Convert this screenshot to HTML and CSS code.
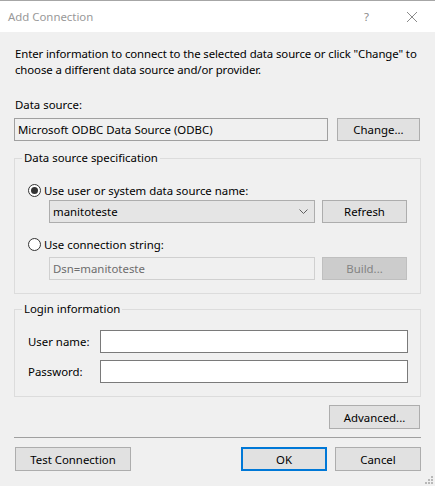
FILE: index.html
```html
<!DOCTYPE html>
<html>
<head>
<meta charset="utf-8">
<link rel="stylesheet" href="styles.css">
</head>
<body>
<div class="window">
  <div class="titlebar">
    <span class="title">Add Connection</span>
    <span class="tb-help">?</span>
    <span class="tb-close"><svg width="12" height="12" viewBox="0 0 12 12"><path d="M1 1 L11 11 M11 1 L1 11" stroke="#8a8a8a" stroke-width="1" fill="none"/></svg></span>
  </div>
  <div class="content">
    <p class="intro">Enter information to connect to the selected data source or click "Change" to choose a different data source and/or provider.</p>
    <div class="label ds-label">Data source:</div>
    <div class="row ds-row">
      <div class="textbox ds-box">Microsoft ODBC Data Source (ODBC)</div>
      <div class="btn btn-change">Change...</div>
    </div>

    <fieldset class="group spec">
      <legend>Data source specification</legend>
      <div class="group-body spec-body">
        <div class="radio-row">
          <span class="radio checked"></span><span>Use user or system data source name:</span>
        </div>
        <div class="row sub-row">
          <div class="combo"><span>manitoteste</span><svg class="chev" width="9" height="6" viewBox="0 0 9 6"><path d="M0.5 0.5 L4.5 4.5 L8.5 0.5" stroke="#606060" fill="none"/></svg></div>
          <div class="btn btn-side">Refresh</div>
        </div>
        <div class="radio-row r2">
          <span class="radio"></span><span>Use connection string:</span>
        </div>
        <div class="row sub-row">
          <div class="textbox disabled conn">Dsn=manitoteste</div>
          <div class="btn btn-side disabled-btn">Build...</div>
        </div>
      </div>
    </fieldset>

    <fieldset class="group login">
      <legend>Login information</legend>
      <div class="group-body login-body">
        <div class="field-row">
          <span class="field-label">User name:</span>
          <div class="input"></div>
        </div>
        <div class="field-row r2f">
          <span class="field-label">Password:</span>
          <div class="input"></div>
        </div>
      </div>
    </fieldset>

    <div class="adv-row"><div class="btn btn-adv">Advanced...</div></div>
    <div class="separator"></div>
    <div class="footer">
      <div class="btn btn-test">Test Connection</div>
      <div class="footer-right">
        <div class="btn btn-ok">OK</div>
        <div class="btn btn-cancel">Cancel</div>
      </div>
    </div>
  </div>
  <svg class="grip" width="9" height="9" viewBox="0 0 9 9">
    <rect x="7" y="1" width="2" height="2" fill="#b8b8b8"/>
    <rect x="4" y="4" width="2" height="2" fill="#b8b8b8"/>
    <rect x="7" y="4" width="2" height="2" fill="#b8b8b8"/>
    <rect x="1" y="7" width="2" height="2" fill="#b8b8b8"/>
    <rect x="4" y="7" width="2" height="2" fill="#b8b8b8"/>
    <rect x="7" y="7" width="2" height="2" fill="#b8b8b8"/>
  </svg>
</div>
</body>
</html>
```

FILE: styles.css
```css
* { box-sizing: border-box; }
html, body { margin: 0; padding: 0; }
body {
  width: 435px;
  height: 486px;
  background: #f0f0f0;
  font-family: "Noto Sans", "Open Sans", sans-serif;
  font-size: 11.4px;
  color: #000;
  overflow: hidden;
}
.window {
  position: relative;
  width: 435px;
  height: 486px;
  background: #f0f0f0;
}
.titlebar {
  height: 32px;
  background: #fff;
  border-top: 1px solid #a6a6a6;
  display: flex;
  align-items: center;
  padding-left: 8px;
}
.title {
  color: #999;
  flex: 1;
  line-height: 16px;
}
.tb-help {
  color: #8a8a8a;
  width: 12px;
  margin-right: 30px;
}
.tb-close {
  display: flex;
  margin-right: 17px;
}
.content {
  padding: 0 14px 0 14px;
}
.intro {
  margin: 14px -8px 0 1px;
  line-height: 16px;
  letter-spacing: -0.1px;
}
.label { line-height: 16px; }
.ds-label { margin-top: 19px; margin-left: 1px; }
.row { display: flex; }
.ds-row { margin-top: 5px; }
.textbox {
  height: 23px;
  border: 1px solid #7a7a7a;
  background: #fff;
  padding-left: 3px;
  line-height: 21px;
}
.ds-box {
  width: 314px;
  border-color: #a0a0a0;
  background: #f0f0f0;
}
.btn {
  height: 23px;
  border: 1px solid #adadad;
  background: #e1e1e1;
  display: flex;
  align-items: center;
  justify-content: center;
}
.btn-change { width: 83px; margin-left: 9px; }

.group {
  margin: 0;
  padding: 0;
  border: 1px solid #dcdcdc;
  min-width: 0;
  width: 407px;
}
.group legend {
  margin-left: 7px;
  padding: 0 2px;
  line-height: 16px;
}
.spec { margin-top: 9px; }
.spec-body { padding: 16px 13px 13px 13px; }
.radio-row {
  display: flex;
  align-items: center;
  height: 16px;
  gap: 3px;
}
.radio {
  width: 13px;
  height: 13px;
  border: 1px solid #333;
  border-radius: 50%;
  background: #fff;
  display: flex;
  align-items: center;
  justify-content: center;
}
.radio.checked::after {
  content: "";
  width: 7px;
  height: 7px;
  border-radius: 50%;
  background: #333;
}
.sub-row { margin-top: 2px; margin-left: 21px; gap: 7px; }
.r2 { margin-top: 13px; }
.r2 + .sub-row { margin-top: 5px; }
.combo {
  width: 266px;
  height: 23px;
  border: 1px solid #adadad;
  background: #e5e5e5;
  display: flex;
  align-items: center;
  justify-content: space-between;
  padding: 0 6px 0 3px;
}
.chev { margin-top: 1px; }
.btn-side { width: 85px; }
.textbox.disabled {
  width: 266px;
  border-color: #d0d0d0;
  background: #f0f0f0;
  color: #6d6d6d;
}
.disabled-btn {
  background: #cccccc;
  border-color: #bfbfbf;
  color: #838383;
}

.login { margin-top: 7px; }
.login-body { padding: 13px 12px 13px 13px; }
.field-row {
  display: flex;
  align-items: center;
}
.r2f { margin-top: 7px; }
.field-label { width: 72px; }
.input {
  width: 308px;
  height: 23px;
  border: 1px solid #7a7a7a;
  background: #fff;
}

.adv-row {
  display: flex;
  justify-content: flex-end;
  margin-top: 8px;
  padding-right: 1px;
}
.btn-adv { width: 91px; height: 24px; }
.separator {
  margin-top: 8px;
  height: 1px;
  background: #a0a0a0;
  width: 407px;
}
.footer {
  display: flex;
  justify-content: space-between;
  margin-top: 9px;
  padding-left: 1px;
}
.footer-right { display: flex; gap: 8px; }
.btn-test { width: 116px; height: 24px; }
.btn-ok {
  width: 86px;
  height: 24px;
  border: 2px solid #0078d7;
}
.btn-cancel { width: 86px; height: 24px; }
.grip {
  position: absolute;
  right: 2px;
  bottom: 2px;
}
```
